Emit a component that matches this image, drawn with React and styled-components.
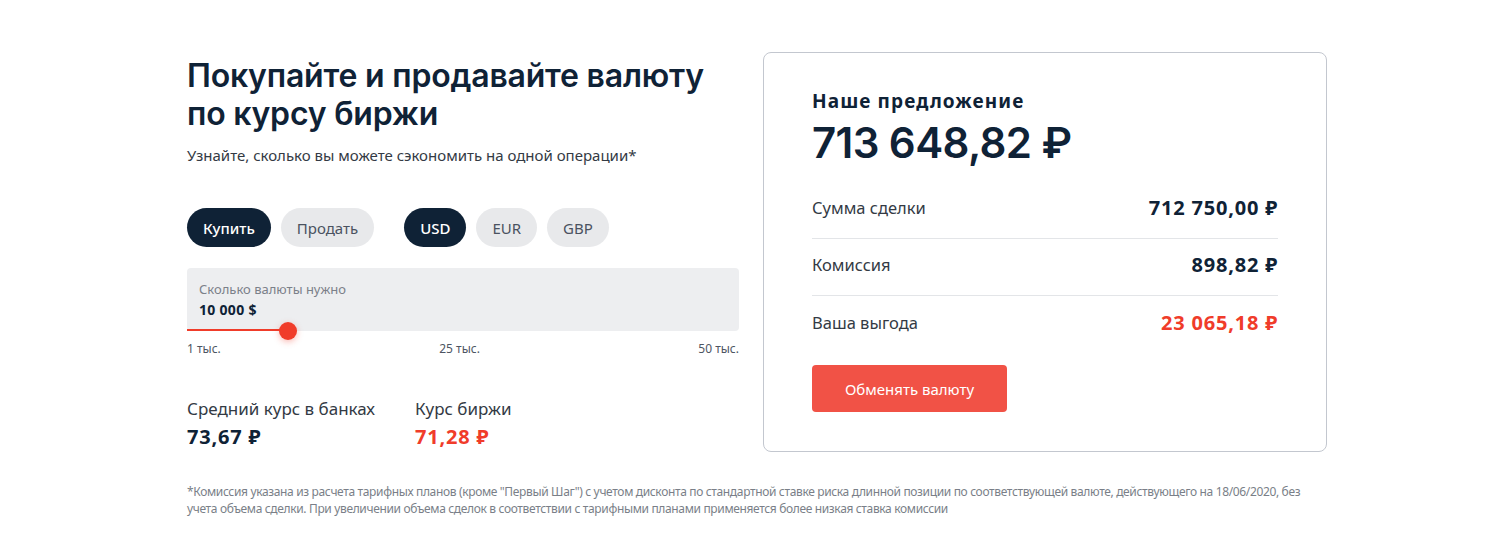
import React from "react";
import styled, { createGlobalStyle } from "styled-components";

const Global = createGlobalStyle`
  html, body { margin: 0; padding: 0; background: #fff; }
  body { font-family: "Noto Sans", "Open Sans", sans-serif; color: #0f2236; }
  * { box-sizing: border-box; }
`;

const Page = styled.div`
  width: 1510px;
  height: 558px;
  padding: 52px 0 0 187px;
`;

const Main = styled.div`
  display: flex;
  gap: 24px;
  width: 1140px;
`;

const Left = styled.div`
  width: 552px;
  padding-top: 5px;
`;

const Title = styled.h1`
  margin: 0;
  font-family: Inter, "Noto Sans", sans-serif;
  font-weight: 600;
  font-size: 32px;
  line-height: 38px;
  letter-spacing: -0.2px;
  color: #0f2236;
`;

const Subtitle = styled.p`
  margin: 12px 0 0;
  font-size: 15px;
  line-height: 20px;
  color: #333a44;
`;

const ChipRow = styled.div`
  display: flex;
  align-items: center;
  margin-top: 43px;
`;

const ChipGroup = styled.div`
  display: flex;
  gap: 10px;
  margin-right: ${(p) => p.$gapAfter || 0}px;
`;

const Chip = styled.button`
  height: 39px;
  padding: 0 16px;
  border: none;
  border-radius: 20px;
  font-family: "Noto Sans", sans-serif;
  font-size: 15px;
  background: ${(p) => (p.$active ? "#0f2236" : "#e8e9eb")};
  color: ${(p) => (p.$active ? "#fff" : "#4a5260")};
  font-weight: ${(p) => (p.$active ? 500 : 400)};
`;

const Field = styled.div`
  position: relative;
  margin-top: 21px;
  height: 63px;
  background: #edeef0;
  border-radius: 4px;
  padding: 12px 12px 0;
`;

const FieldLabel = styled.div`
  font-size: 13px;
  line-height: 18px;
  color: #7b8089;
`;

const FieldValue = styled.div`
  margin-top: 3px;
  font-size: 14px;
  font-weight: 700;
  line-height: 18px;
  letter-spacing: 0.3px;
  color: #0f2236;
`;

const Track = styled.div`
  position: absolute;
  left: 0;
  bottom: 0;
  height: 2px;
  background: #f03c2a;
`;

const Thumb = styled.div`
  position: absolute;
  bottom: -9px;
  width: 18px;
  height: 18px;
  margin-left: -9px;
  border-radius: 50%;
  background: #f03c2a;
  box-shadow: 0 2px 6px rgba(240, 60, 42, 0.35);
`;

const Ticks = styled.div`
  display: flex;
  justify-content: space-between;
  margin-top: 10px;
  font-size: 12px;
  line-height: 16px;
  color: #4d5562;
`;

const Rates = styled.div`
  display: flex;
  gap: 40px;
  margin-top: 41px;
`;

const Rate = styled.div`
  display: flex;
  flex-direction: column;
`;

const RateLabel = styled.div`
  font-size: 17px;
  line-height: 22px;
  color: #333a44;
`;

const RateValue = styled.div`
  margin-top: 4px;
  font-size: 20px;
  font-weight: 700;
  line-height: 26px;
  letter-spacing: 0.8px;
  color: ${(p) => (p.$red ? "#f03c2a" : "#0f2236")};
`;

const Card = styled.div`
  width: 564px;
  height: 400px;
  border: 1px solid #c3c7cf;
  border-radius: 8px;
  padding: 36px 48px 0 48px;
`;

const CardTitle = styled.div`
  font-size: 19px;
  font-weight: 700;
  line-height: 24px;
  letter-spacing: 1.1px;
  color: #0f2236;
`;

const Total = styled.div`
  margin-top: 4px;
  font-family: Inter, "Noto Sans", sans-serif;
  font-size: 42px;
  font-weight: 600;
  line-height: 52px;
  letter-spacing: -0.6px;
  color: #0f2236;
`;

const Rows = styled.div`
  margin-top: 13px;
`;

const Row = styled.div`
  display: flex;
  justify-content: space-between;
  align-items: center;
  height: 57px;
  padding-bottom: 5px;
  border-bottom: ${(p) => (p.$last ? "none" : "1px solid #e3e5e8")};
`;

const RowLabel = styled.div`
  font-size: 16.5px;
  color: #333a44;
`;

const RowValue = styled.div`
  font-size: 20px;
  font-weight: 700;
  letter-spacing: 0.8px;
  color: ${(p) => (p.$red ? "#f03c2a" : "#0f2236")};
`;

const Action = styled.button`
  margin-top: 12px;
  width: 195px;
  height: 47px;
  border: none;
  border-radius: 4px;
  background: #f15246;
  color: #fff;
  font-family: "Noto Sans", sans-serif;
  font-size: 15px;
`;

const Note = styled.p`
  margin: 31px 0 0;
  width: 1130px;
  font-family: "Noto Sans", sans-serif;
  font-size: 12px;
  line-height: 17px;
  letter-spacing: -0.35px;
  color: #7a7f88;
`;

export default function App() {
  const pct = 101 / 552;
  return (
    <>
      <Global />
      <Page>
        <Main>
          <Left>
            <Title>
              Покупайте и продавайте валюту
              <br />
              по курсу биржи
            </Title>
            <Subtitle>Узнайте, сколько вы можете сэкономить на одной операции*</Subtitle>
            <ChipRow>
              <ChipGroup $gapAfter={30}>
                <Chip $active>Купить</Chip>
                <Chip>Продать</Chip>
              </ChipGroup>
              <ChipGroup>
                <Chip $active>USD</Chip>
                <Chip>EUR</Chip>
                <Chip>GBP</Chip>
              </ChipGroup>
            </ChipRow>
            <Field>
              <FieldLabel>Сколько валюты нужно</FieldLabel>
              <FieldValue>10 000 $</FieldValue>
              <Track style={{ width: `${pct * 100}%` }} />
              <Thumb style={{ left: `${pct * 100}%` }} />
            </Field>
            <Ticks>
              <span>1 тыс.</span>
              <span>25 тыс.</span>
              <span>50 тыс.</span>
            </Ticks>
            <Rates>
              <Rate>
                <RateLabel>Средний курс в банках</RateLabel>
                <RateValue>73,67 ₽</RateValue>
              </Rate>
              <Rate>
                <RateLabel>Курс биржи</RateLabel>
                <RateValue $red>71,28 ₽</RateValue>
              </Rate>
            </Rates>
          </Left>
          <Card>
            <CardTitle>Наше предложение</CardTitle>
            <Total>713 648,82 ₽</Total>
            <Rows>
              <Row>
                <RowLabel>Сумма сделки</RowLabel>
                <RowValue>712 750,00 ₽</RowValue>
              </Row>
              <Row>
                <RowLabel>Комиссия</RowLabel>
                <RowValue>898,82 ₽</RowValue>
              </Row>
              <Row $last>
                <RowLabel>Ваша выгода</RowLabel>
                <RowValue $red>23 065,18 ₽</RowValue>
              </Row>
            </Rows>
            <Action>Обменять валюту</Action>
          </Card>
        </Main>
        <Note>
          *Комиссия указана из расчета тарифных планов (кроме "Первый Шаг") с учетом дисконта по стандартной ставке риска длинной позиции по соответствующей валюте, действующего на 18/06/2020, без учета объема сделки. При увеличении объема сделок в соответствии с тарифными планами применяется более низкая ставка комиссии
        </Note>
      </Page>
    </>
  );
}
